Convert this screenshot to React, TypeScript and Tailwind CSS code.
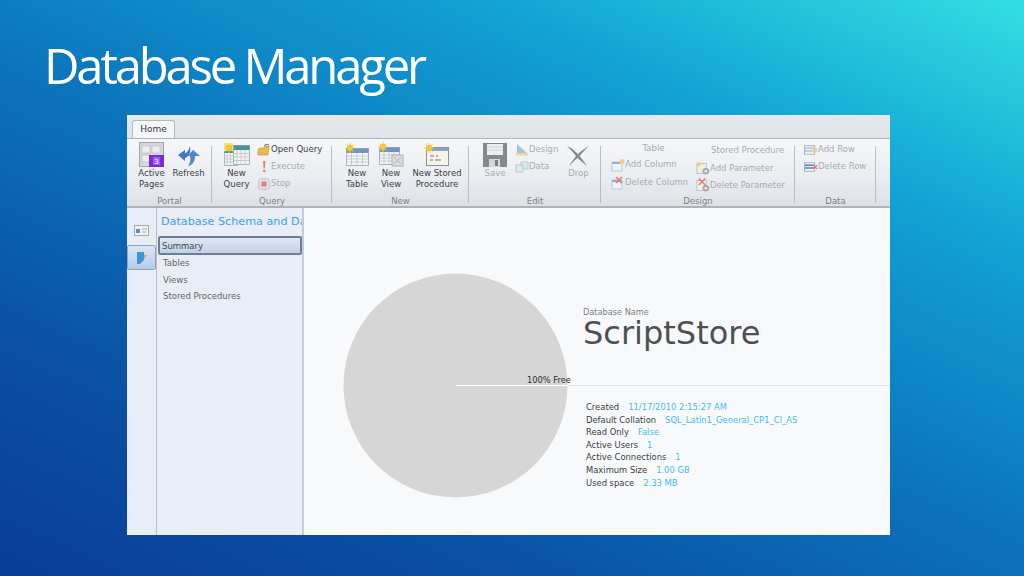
import React from "react";

const F = "font-['DejaVu_Sans',sans-serif]";

function Large({ w, label, icon, dim }: { w: string; label: string[]; icon: React.ReactNode; dim?: boolean }) {
  return (
    <div className={`${w} flex flex-col items-center shrink-0`}>
      <div className="h-[26px] shrink-0 flex items-end justify-center">{icon}</div>
      <div className={`mt-[1px] text-center text-[8.5px] leading-[11px] whitespace-nowrap ${dim ? "text-[#a9acb0]" : "text-[#3d4146]"}`}>
        {label.map((l) => (
          <div key={l}>{l}</div>
        ))}
      </div>
    </div>
  );
}

function Small({ label, icon, dim }: { label: string; icon: React.ReactNode; dim?: boolean }) {
  return (
    <div className={`h-[17px] shrink-0 flex items-center whitespace-nowrap text-[8.5px] ${dim ? "text-[#a9acb0]" : "text-[#3d4146]"}`}>
      <span className="w-[14px] h-[14px] flex items-center justify-center shrink-0">{icon}</span>
      {label}
    </div>
  );
}

function Group({ w, name, children }: { w: string; name: string; children: React.ReactNode }) {
  return (
    <div className={`${w} shrink-0 h-full flex flex-col relative`}>
      <div className="flex-1 flex min-h-0 pt-[2px]">{children}</div>
      <div className="h-[11px] -mb-[1px] text-center text-[8.5px] leading-[11px] text-[#7d8288]">{name}</div>
      <span className="absolute right-0 top-[7px] bottom-[3px] w-px bg-[#b9bec4]" />
    </div>
  );
}

const ActivePages = () => (
  <svg width="26" height="25" viewBox="0 0 26 25">
    <rect x="0.5" y="0.5" width="24" height="24" fill="#d5d7da" stroke="#a2a5a9" />
    <rect x="3" y="4" width="8" height="7" fill="#eceded" stroke="#b8babd" strokeWidth=".6" />
    <rect x="13" y="4" width="8" height="7" fill="#eceded" stroke="#b8babd" strokeWidth=".6" />
    <rect x="3" y="13" width="8" height="7" fill="#eceded" stroke="#b8babd" strokeWidth=".6" />
    <rect x="10" y="13" width="15" height="12" fill="#7a28d8" />
    <rect x="14" y="15" width="7" height="8" fill="#9a5cf0" />
    <text x="17.5" y="22" fontSize="7" fill="#fff" textAnchor="middle">3</text>
  </svg>
);
const RefreshIcon = () => (
  <svg width="24" height="22" viewBox="0 0 24 22">
    <path d="M1 10L8 5V8C10 8 12 5 13 1C14 7 12 12 8 13V16Z" fill="#3f78c0" />
    <path d="M23 11L16 5L10 11H13C14 15 13 18 11 21C16 20 18 16 18 11Z" fill="#4a8ad0" />
  </svg>
);
const Star = ({ x = 0, y = 0 }: { x?: number; y?: number }) => (
  <g transform={`translate(${x} ${y})`}>
    <circle cx="5" cy="5" r="3" fill="#f7b71d" />
    <path d="M5 0V10M0 5H10M1.5 1.5L8.5 8.5M8.5 1.5L1.5 8.5" stroke="#f7c84a" strokeWidth="1" />
  </g>
);
const Grid = ({ x, y, w, h, head = "#6f94c4" }: { x: number; y: number; w: number; h: number; head?: string }) => {
  const cols = [1, 2, 3].map((i) => x + (w * i) / 4);
  const rows = [1, 2, 3].map((i) => y + 5 + ((h - 5) * i) / 4);
  return (
    <g>
      <rect x={x + 0.5} y={y + 0.5} width={w} height={h} fill="#f3f4f2" stroke="#9aa5b0" strokeWidth=".8" />
      <rect x={x + 0.5} y={y + 0.5} width={w} height={4.5} fill={head} />
      {cols.map((c) => <path key={c} d={`M${c} ${y + 5}V${y + h}`} stroke="#b6c0ca" strokeWidth=".7" />)}
      {rows.map((r) => <path key={r} d={`M${x} ${r}H${x + w}`} stroke="#b6c0ca" strokeWidth=".7" />)}
    </g>
  );
};
const NewQuery = () => (
  <svg width="26" height="24" viewBox="0 0 26 24">
    <Grid x={0} y={5} w={13} h={17} head="#3e9a98" />
    <Grid x={9} y={2} w={16} h={19} head="#4f8f9c" />
    <rect x="0" y="0" width="9" height="8" fill="#f2e57a" />
    <Star x={0} y={0} />
  </svg>
);
const NewTable = () => (
  <svg width="24" height="24" viewBox="0 0 24 24">
    <Grid x={1} y={5} w={22} h={17} />
    <Star x={0} y={0} />
  </svg>
);
const NewView = () => (
  <svg width="26" height="25" viewBox="0 0 26 25">
    <Grid x={1} y={5} w={20} h={17} />
    <rect x="14" y="13" width="11" height="11" fill="#dadcdf" stroke="#9da2a8" strokeWidth=".8" />
    <path d="M16 15L23 22M23 15L16 22" stroke="#a9adb2" strokeWidth=".8" />
    <Star x={0} y={0} />
  </svg>
);
const NewSP = () => (
  <svg width="26" height="24" viewBox="0 0 26 24">
    <rect x="2.5" y="4.5" width="22" height="18" fill="#f5f4ea" stroke="#8c9298" />
    <rect x="3" y="5" width="21" height="3" fill="#8aa3bf" />
    <path d="M6 13H10M12 13H14M6 17H9M11 17H17" stroke="#6d7278" strokeWidth="1" />
    <Star x={0} y={0} />
  </svg>
);
const Folder = () => (
  <svg width="14" height="14" viewBox="0 0 14 14">
    <path d="M1 12V6L3 5H7L8 3H12L11 12Z" fill="#e8bb4d" stroke="#b08a2c" strokeWidth=".5" />
    <path d="M7 3C8 1 10 1 12 2" stroke="#6a6f76" strokeWidth="1" fill="none" />
  </svg>
);
const Bang = () => (
  <svg width="14" height="14" viewBox="0 0 14 14">
    <path d="M6 1H8.4L7.8 8.5H6.6Z" fill="#ea7d80" />
    <circle cx="7.2" cy="11" r="1.3" fill="#ea7d80" />
  </svg>
);
const StopI = () => (
  <svg width="14" height="14" viewBox="0 0 14 14">
    <rect x="1.5" y="1.5" width="11" height="11" rx="3" fill="#dfe1e4" stroke="#c4c6ca" />
    <rect x="4.5" y="4.5" width="5" height="5" fill="#e27f84" />
  </svg>
);
const Save = () => (
  <svg width="24" height="24" viewBox="0 0 24 24">
    <path d="M0 0H24V24H0Z" fill="#85888c" />
    <rect x="4" y="1" width="16" height="11" fill="#eeeeee" />
    <path d="M4 4H20M4 7H20" stroke="#c5c7ca" strokeWidth=".8" />
    <rect x="6" y="16" width="11" height="8" fill="#d5d6d8" />
    <rect x="12" y="17" width="3" height="6" fill="#7b7e82" />
  </svg>
);
const Design = () => (
  <svg width="14" height="14" viewBox="0 0 14 14">
    <path d="M2 1L12 10H2Z" fill="#a9c0de" />
    <rect x="1" y="10" width="12" height="2.5" fill="#efd79a" />
  </svg>
);
const DataI = () => (
  <svg width="14" height="14" viewBox="0 0 14 14" fill="#dfe8ee" stroke="#a9c2cc" strokeWidth=".8">
    <rect x="6" y="2" width="7" height="7" />
    <rect x="1" y="5" width="7" height="7" />
  </svg>
);
const Drop = () => (
  <svg width="24" height="22" viewBox="0 0 24 22">
    <path d="M1 1C6 3 10 7 12 9C15 6 19 3 23 1C19 5 16 8 13.5 11C17 15 19 18 21 21C17 18 14 15 11.5 13C8 16 6 18 3 21C5 17 8 14 10 11C7 7 4 4 1 1Z" fill="#85888c" />
  </svg>
);
const Tbl = ({ mark }: { mark: "add" | "del" }) => (
  <svg width="14" height="14" viewBox="0 0 14 14">
    <rect x="1" y="4" width="10" height="9" fill="#f0f3f6" stroke="#a8bfd4" strokeWidth=".8" />
    <rect x="1" y="4" width="10" height="2" fill="#93b2d4" />
    {mark === "add" ? (
      <circle cx="11" cy="3.5" r="2.5" fill="#f3cd7a" />
    ) : (
      <path d="M5 1L11 7M11 1L5 7" stroke="#e3777a" strokeWidth="1.5" />
    )}
  </svg>
);
const Param = ({ mark }: { mark: "add" | "del" }) => (
  <svg width="15" height="15" viewBox="0 0 15 15">
    <rect x="1" y="2" width="10" height="11" fill="#f1efe2" stroke="#b5b8bb" strokeWidth=".8" />
    <circle cx="10.5" cy="10.5" r="3.5" fill="#a6a9ad" />
    <circle cx="10.5" cy="10.5" r="1.4" fill="#eceded" />
    {mark === "add" ? (
      <circle cx="3" cy="3" r="2.2" fill="#f3cd7a" />
    ) : (
      <path d="M3 0L10 7M10 0L3 7" stroke="#e3777a" strokeWidth="1.5" />
    )}
  </svg>
);
const Row = ({ mark }: { mark: "add" | "del" }) => (
  <svg width="15" height="14" viewBox="0 0 15 14">
    <rect x="0.5" y="2.5" width="11" height="9" fill="#eef1f5" stroke="#8fa3bf" strokeWidth=".8" />
    <path d="M1 5H11M1 8H11" stroke={mark === "add" ? "#b7c5d6" : "#5f7fae"} strokeWidth="1.6" />
    {mark === "add" ? (
      <circle cx="12" cy="7" r="2.4" fill="#f3cd7a" />
    ) : (
      <path d="M10 5L14 9M14 5L10 9" stroke="#e0686c" strokeWidth="1.2" />
    )}
  </svg>
);

const Info = ({ k, v }: { k: string; v: string }) => (
  <div className="h-[12.6px] leading-[12.6px] flex gap-[9px] whitespace-nowrap">
    <span className="text-[#3a3d40]">{k}</span>
    <span className="text-[#3fbdf3]">{v}</span>
  </div>
);

export default function App() {
  return (
    <div className="w-[1024px] h-[576px] overflow-hidden bg-[linear-gradient(205deg,#33dfe2_0%,#12a2d4_24%,#0b72bb_52%,#0a4fa4_78%,#0a3c98_100%)]">
      <h1 className="pl-[44px] pt-[36px] h-[115px] text-[49px] leading-[58px] font-normal tracking-[-3.2px] text-white font-['Open_Sans',sans-serif]">
        Database Manager
      </h1>
      <div className={`ml-[127px] w-[763px] h-[420px] flex flex-col overflow-hidden bg-[#f8f9fb] ${F}`}>
        <div className="h-[23px] shrink-0 pl-[5px] pt-[5px] bg-[linear-gradient(#e6e9ec,#e0e3e7)]">
          <div className="w-[43px] h-[19px] bg-[#f4f6f8] border border-b-0 border-[#b4b8bc] rounded-t-[3px] text-center text-[9px] leading-[17px] text-[#35383c]">
            Home
          </div>
        </div>
        <div className="h-[70px] shrink-0 flex border-t border-t-[#b0b4b8] border-b-2 border-b-[#b0b4b8] bg-[linear-gradient(#f6f7f9,#e9ecf0_60%,#dde1e6)]">
          <Group w="w-[85px]" name="Portal">
            <Large w="w-[35px] ml-[7px]" label={["Active", "Pages"]} icon={<ActivePages />} />
            <Large w="w-[35px] ml-[2px]" label={["Refresh"]} icon={<RefreshIcon />} />
          </Group>
          <Group w="w-[120px]" name="Query">
            <Large w="w-[41px] ml-[4px]" label={["New", "Query"]} icon={<NewQuery />} />
            <div className="flex flex-col">
              <Small label="Open Query" icon={<Folder />} />
              <Small label="Execute" dim icon={<Bang />} />
              <Small label="Stop" dim icon={<StopI />} />
            </div>
          </Group>
          <Group w="w-[137px]" name="New">
            <Large w="w-[34px] ml-[8px]" label={["New", "Table"]} icon={<NewTable />} />
            <Large w="w-[34px]" label={["New", "View"]} icon={<NewView />} />
            <Large w="w-[58px]" label={["New Stored", "Procedure"]} icon={<NewSP />} />
          </Group>
          <Group w="w-[132px]" name="Edit">
            <Large w="w-[34px] ml-[9px]" dim label={["Save"]} icon={<Save />} />
            <div className="flex flex-col ml-[3px]">
              <Small label="Design" dim icon={<Design />} />
              <Small label="Data" dim icon={<DataI />} />
            </div>
            <Large w="w-[36px] ml-[2px]" dim label={["Drop"]} icon={<Drop />} />
          </Group>
          <Group w="w-[194px]" name="Design">
            <div className="flex flex-col ml-[10px] w-[85px] -mt-[1px]">
              <div className="h-[16px] text-center text-[8.5px] leading-[16px] text-[#a9acb0]">Table</div>
              <Small label="Add Column" dim icon={<Tbl mark="add" />} />
              <div className="mt-[1px]"><Small label="Delete Column" dim icon={<Tbl mark="del" />} /></div>
            </div>
            <div className="flex flex-col w-[95px] pt-[1px]">
              <div className="h-[18px] pl-[15px] text-[8.5px] leading-[17px] text-[#a9acb0] whitespace-nowrap">Stored Procedure</div>
              <Small label="Add Parameter" dim icon={<Param mark="add" />} />
              <Small label="Delete Parameter" dim icon={<Param mark="del" />} />
            </div>
          </Group>
          <Group w="w-[81px]" name="Data">
            <div className="flex flex-col ml-[9px]">
              <Small label="Add Row" dim icon={<Row mark="add" />} />
              <Small label="Delete Row" dim icon={<Row mark="del" />} />
            </div>
          </Group>
        </div>
        <div className="flex-1 flex min-h-0">
          <div className="w-[30px] shrink-0 bg-[#e9eef6] border-r border-[#b9c0ca] pt-[14px] flex flex-col items-center">
            <div className="h-[17px] flex items-center">
              <svg width="15" height="13" viewBox="0 0 15 13">
                <rect x=".5" y="1.5" width="14" height="10" fill="#f1f2f4" stroke="#a5aab0" />
                <rect x="2" y="5" width="4" height="4" fill="#4f8fd0" />
                <path d="M8 5H13M8 8H12" stroke="#a5aab0" />
              </svg>
            </div>
            <div className="mt-[6px] w-[29px] h-[25px] flex items-center justify-center border border-[#8ea5c2] rounded-[2px] bg-[linear-gradient(#dbe5f2,#b8cce6)]">
              <svg width="13" height="14" viewBox="0 0 13 14">
                <path d="M2 1H9V9L5 13H2Z" fill="#3f92dc" />
                <path d="M9 4H12L9 8Z" fill="#e5a54a" />
              </svg>
            </div>
          </div>
          <div className="w-[147px] shrink-0 bg-[#e9eef6] border-r-2 border-[#c6ccd5] overflow-hidden">
            <div className="pl-[4px] pt-[6px] h-[28px] text-[11.2px] leading-[16px] text-[#3aa0ea] whitespace-nowrap overflow-hidden">
              Database Schema and Da
            </div>
            <div className="ml-[1px] w-[144px] h-[19px] pl-[2px] text-[8.5px] leading-[16px] text-[#44484d] border-2 border-[#6e7f93] rounded-[2px] bg-[linear-gradient(#dfe7f3,#c0d1e8)]">
              Summary
            </div>
            <div className="pl-[6px] text-[8.5px] leading-[16.7px] text-[#63676c]">
              <div>Tables</div>
              <div>Views</div>
              <div>Stored Procedures</div>
            </div>
          </div>
          <div className="flex-1 relative bg-[#f8f9fb] flex">
            <div className="w-[279px] shrink-0 pl-[39px] pt-[65px]">
              <svg width="225" height="225" viewBox="0 0 225 225" className="block">
                <circle cx="112.5" cy="112.5" r="112" fill="#d6d6d6" />
              </svg>
            </div>
            <div className="flex-1 pt-[99px]">
              <div className="text-[8.2px] leading-[11px] text-[#7c7f83]">Database Name</div>
              <div className="text-[32px] leading-[31px] text-[#4d5053]">ScriptStore</div>
              <div className="mt-[52px] ml-[3px] text-[8.4px]">
                <Info k="Created" v="11/17/2010 2:15:27 AM" />
                <Info k="Default Collation" v="SQL_Latin1_General_CP1_CI_AS" />
                <Info k="Read Only" v="False" />
                <Info k="Active Users" v="1" />
                <Info k="Active Connections" v="1" />
                <Info k="Maximum Size" v="1.00 GB" />
                <Info k="Used space" v="2.33 MB" />
              </div>
            </div>
            <span className="absolute left-[152px] w-[112px] top-[177px] h-px bg-white" />
            <span className="absolute left-[264px] right-0 top-[177px] h-px bg-[#dfe3e8]" />
            <span className="absolute left-[223px] top-[167px] text-[8.3px] leading-[11px] text-[#2f3133] whitespace-nowrap">100% Free</span>
          </div>
        </div>
      </div>
    </div>
  );
}
